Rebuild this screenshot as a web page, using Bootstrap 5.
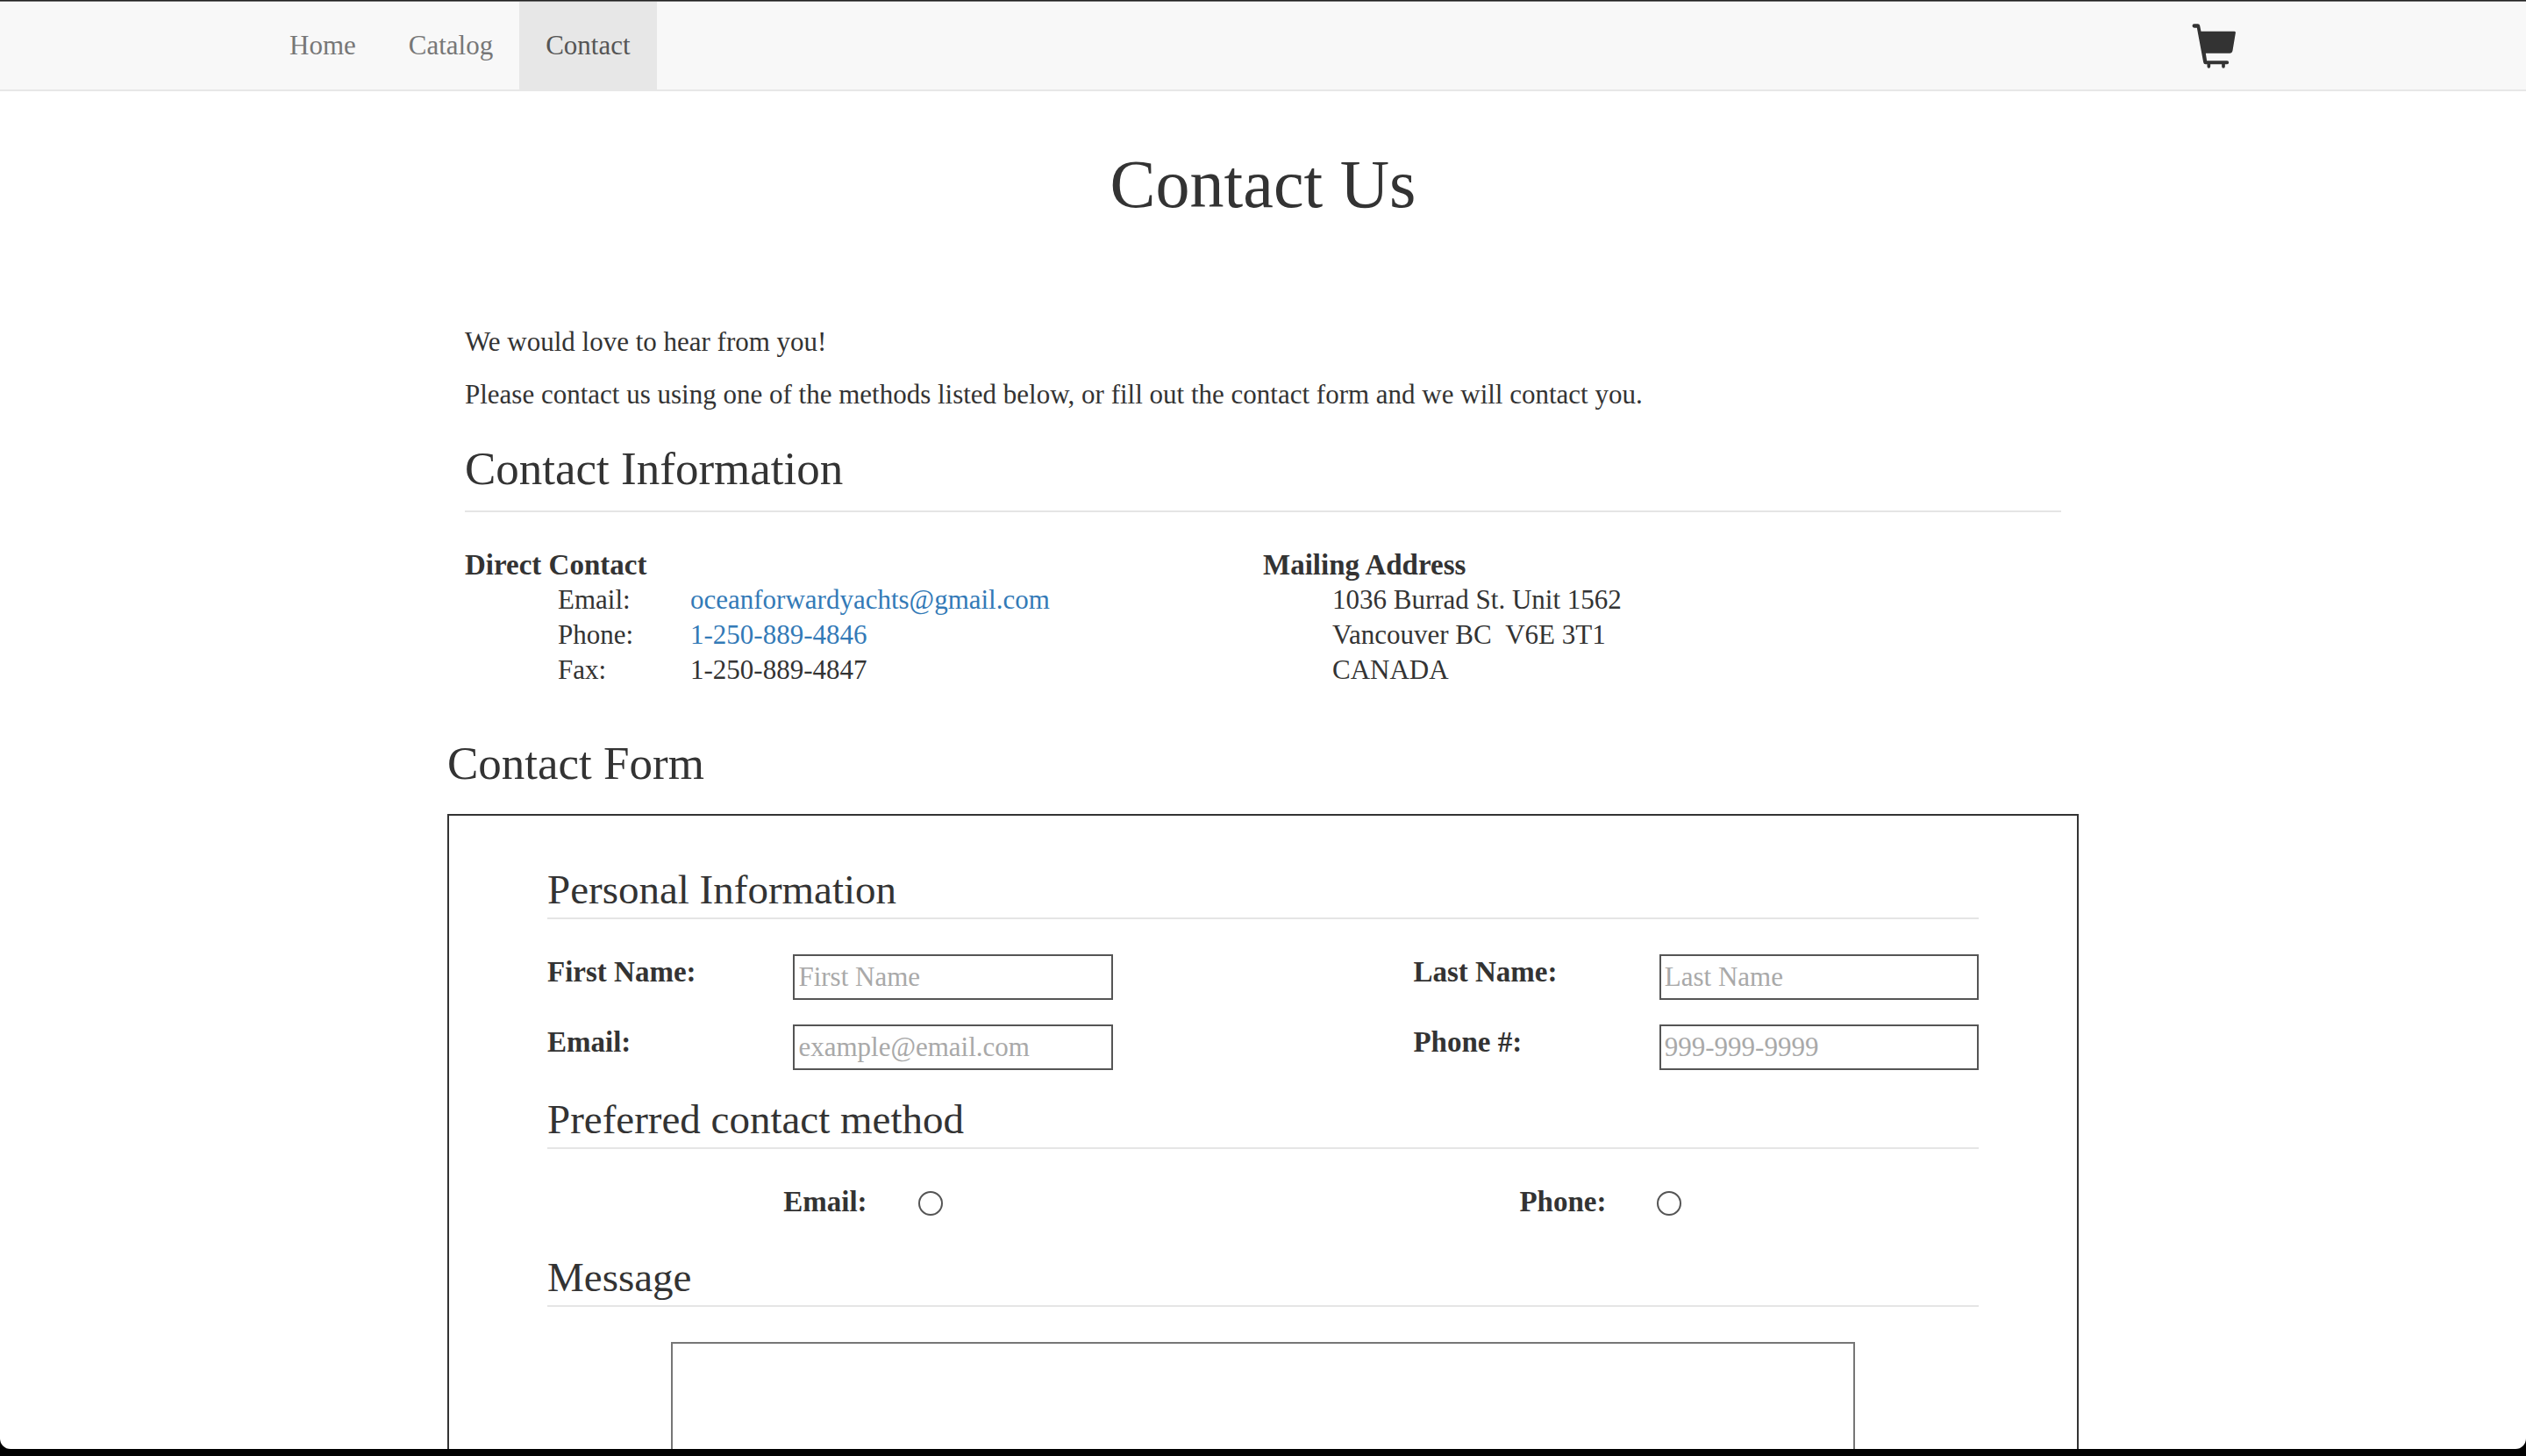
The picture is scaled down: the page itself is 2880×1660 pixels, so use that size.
<!DOCTYPE html>
<html lang="en">
<head>
<meta charset="utf-8">
<meta name="viewport" content="width=device-width, initial-scale=1">
<title>Contact Us</title>
<link href="https://cdn.jsdelivr.net/npm/bootstrap@5.3.0/dist/css/bootstrap.min.css" rel="stylesheet">
<style>
  body { background: #000; color: #333; font-family: Georgia, "Liberation Serif", serif; font-size: 31px; line-height: 40px; padding-bottom: 8px; }
  .window-frame { background: #fff; border-radius: 0 0 12px 12px; border-top: 1px solid #222; }
  .site-nav { background: #f8f8f8; border-top: 1px solid #777; border-bottom: 2px solid #e7e7e7; }
  .site-nav .inner { max-width: 2340px; padding: 0 30px; }
  .site-nav .nav-link { color: #777; padding: 30px; line-height: 40px; }
  .site-nav .nav-link.active { color: #555; background: #e7e7e7; }
  .site-nav .cart-link { color: #333; padding: 0 30px; }
  .page-title { font-size: 78px; line-height: 80px; margin: 66px 0 120px; }
  .page-body { max-width: 1860px; }
  .intro { padding: 0 20px; }
  .intro p { margin-bottom: 20px; }
  h2 { font-size: 53px; line-height: 60px; }
  h3 { font-size: 47px; line-height: 52px; }
  .ruled { border-bottom: 2px solid #e5e5e5; margin-bottom: 40px; }
  h2.ruled { margin-top: 34px; padding-bottom: 18px; }
  h3.ruled { padding-bottom: 6px; }
  .form-title { margin: 56px 0 28px; }
  b, label { font-size: 33px; font-weight: 700; line-height: 40px; }
  .direct-list { display: grid; grid-template-columns: 151px 1fr; padding-left: 106px; }
  .direct-list a { color: #337ab7; }
  .direct-list dt { font-weight: 400; }
  .mail-lines { padding-left: 79px; }
  .form-box { border: 2px solid #333; padding: 58px 112px; }
  .field-rows { row-gap: 28px; margin-bottom: 30px; }
  .field-pair { width: 39.5%; }
  .field-pair input { width: 56.5%; height: 52px; padding: 0 4px; border: 2px solid #555; border-radius: 0; color: #333; background: #fff; }
  .field-pair input::placeholder { color: #a9a9a9; opacity: 1; }
  .method-row { padding-left: 16.5%; padding-right: 20.75%; margin-bottom: 40px; }
  .method-row .choice { column-gap: 58px; }
  .method-row input { appearance: none; width: 28px; height: 28px; border: 2px solid #555; border-radius: 50%; margin: 4px 0 0; background: #fff; }
  .method-row input:checked { background: #337ab7; }
  .message-box { width: 82.7%; height: 400px; border: 2px solid #767676; resize: none; }
</style>
<script src="https://cdn.jsdelivr.net/npm/bootstrap@5.3.0/dist/js/bootstrap.bundle.min.js"></script>
</head>
<body class="vh-100 d-flex flex-column overflow-hidden">
<div class="window-frame flex-fill overflow-hidden">
  <nav class="site-nav" aria-label="Main">
    <div class="inner mx-auto d-flex justify-content-between align-items-center">
      <ul class="nav">
        <li class="nav-item"><a class="nav-link" href="#">Home</a></li>
        <li class="nav-item"><a class="nav-link" href="#">Catalog</a></li>
        <li class="nav-item"><a class="nav-link active" aria-current="page" href="#">Contact</a></li>
      </ul>
      <a class="cart-link d-flex" href="#" aria-label="Shopping cart">
        <svg width="51" height="52" viewBox="118 79 152 156" fill="currentColor" aria-hidden="true">
          <path d="M126 83H138Q144 83 145 89L149 108H263Q268 108 267 114L257 174Q255 183 247 183H165L169 209H238Q244 209 244 215Q244 221 238 221H231V228Q231 234 225.500 234Q220 234 220 228V221H181V228Q181 234 175.500 234Q170 234 170 228V221H164Q158 221 157 214L135 96H126Q119 96 119 89.500Q119 83 126 83Z"/>
        </svg>
      </a>
    </div>
  </nav>

  <main class="page-body mx-auto">
    <h1 class="page-title text-center fw-normal">Contact Us</h1>
    <section class="intro">
      <p>We would love to hear from you!</p>
      <p>Please contact us using one of the methods listed below, or fill out the contact form and we will contact you.</p>
      <h2 class="ruled fw-normal">Contact Information</h2>
      <div class="row g-0">
        <div class="col-6">
          <b class="d-block">Direct Contact</b>
          <dl class="direct-list m-0">
            <dt>Email:</dt><dd class="m-0"><a class="text-decoration-none" href="mailto:oceanforwardyachts@gmail.com">oceanforwardyachts@gmail.com</a></dd>
            <dt>Phone:</dt><dd class="m-0"><a class="text-decoration-none" href="tel:1-250-889-4846">1-250-889-4846</a></dd>
            <dt>Fax:</dt><dd class="m-0">1-250-889-4847</dd>
          </dl>
        </div>
        <div class="col-6">
          <b class="d-block">Mailing Address</b>
          <address class="mail-lines m-0">1036 Burrad St. Unit 1562<br>Vancouver BC &nbsp;V6E 3T1<br>CANADA</address>
        </div>
      </div>
    </section>

    <h2 class="form-title fw-normal">Contact Form</h2>
    <form class="form-box">
      <h3 class="ruled fw-normal">Personal Information</h3>
      <div class="field-rows d-flex flex-wrap justify-content-between">
        <div class="field-pair d-flex justify-content-between align-items-start">
          <label for="first">First Name:</label><input id="first" type="text" placeholder="First Name">
        </div>
        <div class="field-pair d-flex justify-content-between align-items-start">
          <label for="last">Last Name:</label><input id="last" type="text" placeholder="Last Name">
        </div>
        <div class="field-pair d-flex justify-content-between align-items-start">
          <label for="mail">Email:</label><input id="mail" type="email" placeholder="example@email.com">
        </div>
        <div class="field-pair d-flex justify-content-between align-items-start">
          <label for="tel">Phone #:</label><input id="tel" type="tel" placeholder="999-999-9999">
        </div>
      </div>
      <h3 class="ruled fw-normal">Preferred contact method</h3>
      <div class="method-row d-flex justify-content-between">
        <div class="choice d-flex align-items-center"><label for="by-mail">Email:</label><input id="by-mail" type="radio" name="method"></div>
        <div class="choice d-flex align-items-center"><label for="by-phone">Phone:</label><input id="by-phone" type="radio" name="method"></div>
      </div>
      <h3 class="ruled fw-normal" id="message-title">Message</h3>
      <textarea class="message-box d-block mx-auto" aria-labelledby="message-title"></textarea>
    </form>
  </main>
</div>
</body>
</html>
